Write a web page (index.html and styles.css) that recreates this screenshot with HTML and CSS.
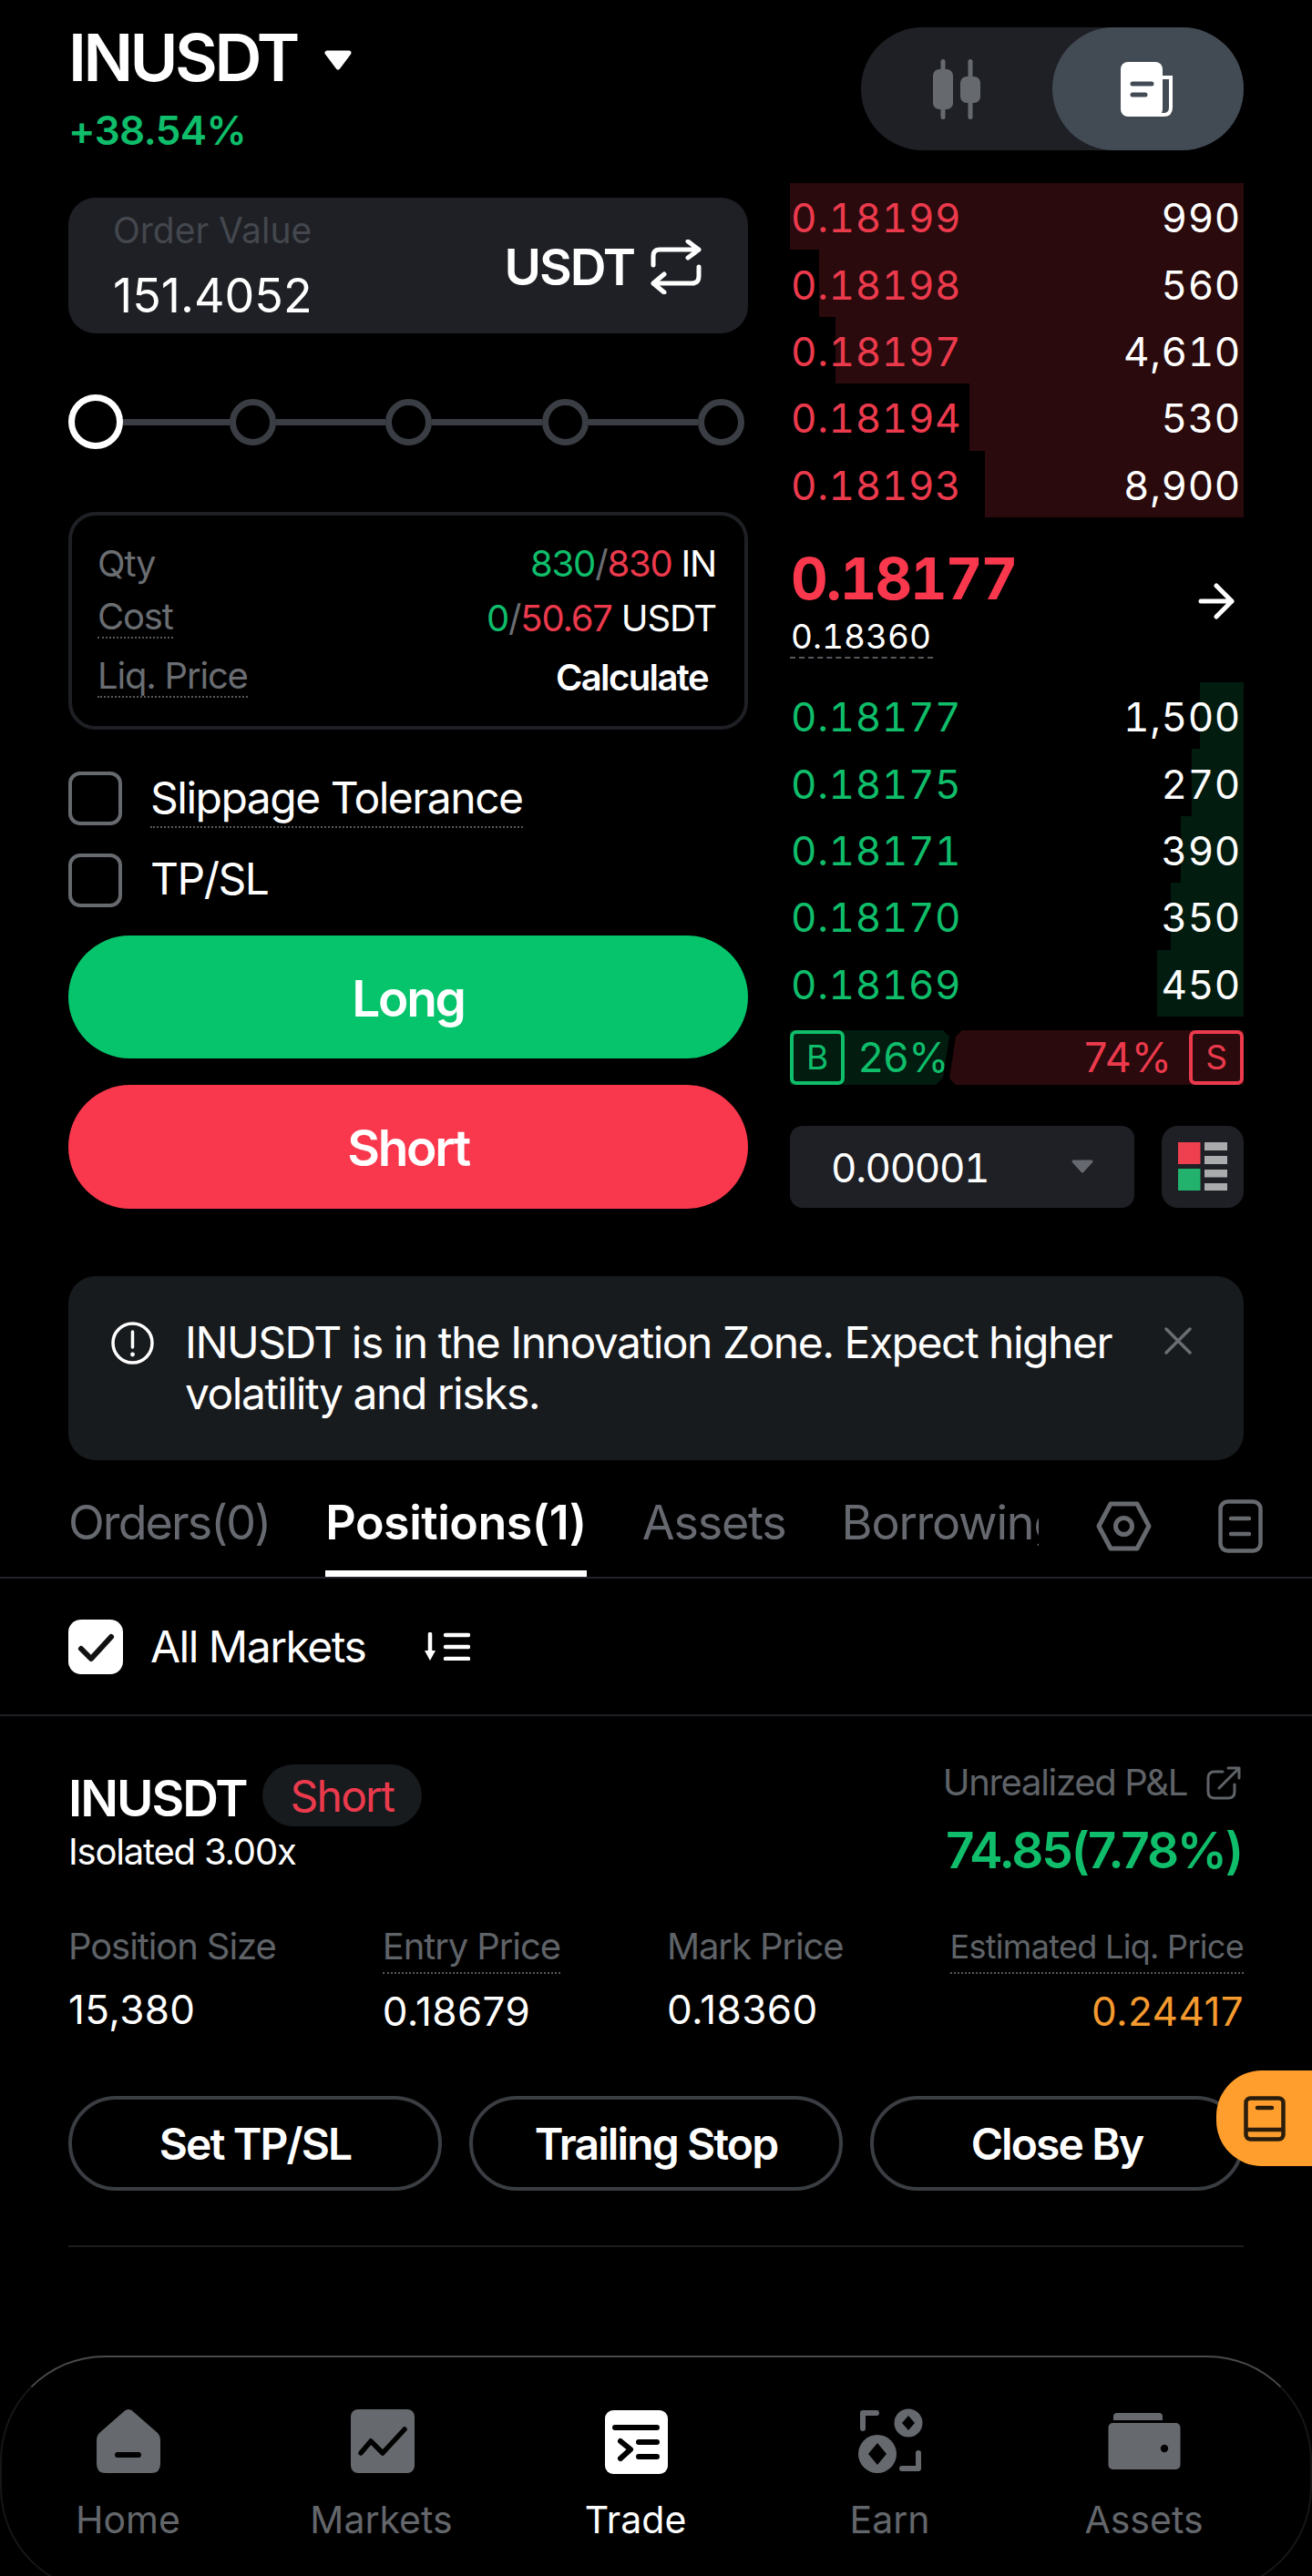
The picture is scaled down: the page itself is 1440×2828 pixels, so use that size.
FILE: index.html
```html
<!DOCTYPE html>
<html lang="en">
<head>
<meta charset="utf-8">
<title>INUSDT</title>
<link rel="stylesheet" href="styles.css">
</head>
<body>
<div class="app">
  <section class="trade">
    <div class="col-left">
      <div class="title-row">
        <h1 class="title">INUSDT</h1>
        <svg class="title-caret" viewBox="0 0 30 22"><path d="M3 3H27L15 19Z" fill="#fff" stroke="#fff" stroke-width="5" stroke-linejoin="round"/></svg>
      </div>
      <div class="change">+38.54%</div>
      <div class="order-input">
        <div class="order-left">
          <div class="order-label">Order Value</div>
          <div class="order-value">151.4052</div>
        </div>
        <div class="order-unit">
          <span>USDT</span>
          <svg class="swap" viewBox="0 0 56 60" fill="none" stroke="#fff" stroke-width="5" stroke-linecap="round" stroke-linejoin="round"><path d="M3 28V18Q3 11 10 11H53M41 2L53 11L41 20"/><path d="M53 30V40Q53 48 46 48H3M15 38L3 48L15 58"/></svg>
        </div>
      </div>
      <div class="slider">
        <span class="knob active"></span><span class="seg"></span>
        <span class="knob"></span><span class="seg"></span>
        <span class="knob"></span><span class="seg"></span>
        <span class="knob"></span><span class="seg"></span>
        <span class="knob"></span>
      </div>
      <div class="info">
        <div class="info-row"><span class="muted">Qty</span><span><span class="up">830</span><span class="muted">/</span><span class="down">830</span> IN</span></div>
        <div class="info-row"><span class="muted dotted">Cost</span><span><span class="up">0</span><span class="muted">/</span><span class="down">50.67</span> USDT</span></div>
        <div class="info-row last"><span class="muted dotted">Liq. Price</span><span class="calc">Calculate</span></div>
      </div>
      <div class="check-row first"><span class="box"></span><span class="check-text dotted-light">Slippage Tolerance</span></div>
      <div class="check-row"><span class="box"></span><span class="check-text plain">TP/SL</span></div>
      <button class="cta long">Long</button>
      <button class="cta short">Short</button>
    </div>

    <div class="col-right">
      <div class="toggle">
        <span class="toggle-half">
          <svg class="candles" viewBox="0 0 52 66" fill="#666a6f"><rect x="8.500" y="0" width="5" height="66" rx="2.500"/><rect x="0" y="11" width="22" height="44" rx="7"/><rect x="38.500" y="0" width="5" height="66" rx="2.500"/><rect x="30" y="19" width="22" height="29" rx="7"/></svg>
        </span>
        <span class="toggle-half on">
          <svg class="doc" viewBox="0 0 58 60"><path d="M44 17H55V50Q55 58 47 58H36" fill="none" stroke="#fff" stroke-width="4"/><rect x="0" y="0" width="46" height="60" rx="8" fill="#fff"/><path d="M13 24H34M13 36H27" stroke="#424a54" stroke-width="5" stroke-linecap="round"/></svg>
        </span>
      </div>

      <div class="book">
        <div class="level ask" style="--d:100%"><span>0.18199</span><span class="qty">990</span></div>
        <div class="level ask" style="--d:93.6%"><span>0.18198</span><span class="qty">560</span></div>
        <div class="level ask" style="--d:90%"><span>0.18197</span><span class="qty">4,610</span></div>
        <div class="level ask" style="--d:60.4%"><span>0.18194</span><span class="qty">530</span></div>
        <div class="level ask" style="--d:57%"><span>0.18193</span><span class="qty">8,900</span></div>
      </div>

      <div class="mid">
        <div>
          <div class="last-price">0.18177</div>
          <div class="mark-wrap"><span class="mark-price">0.18360</span></div>
        </div>
        <svg class="arrow" viewBox="0 0 40 40" fill="none" stroke="#fff" stroke-width="5" stroke-linecap="round" stroke-linejoin="round"><path d="M3 20H37M20 3L37 20L20 37"/></svg>
      </div>

      <div class="book">
        <div class="level bid" style="--d:9.6%"><span>0.18177</span><span class="qty">1,500</span></div>
        <div class="level bid" style="--d:11.4%"><span>0.18175</span><span class="qty">270</span></div>
        <div class="level bid" style="--d:13.9%"><span>0.18171</span><span class="qty">390</span></div>
        <div class="level bid" style="--d:16.1%"><span>0.18170</span><span class="qty">350</span></div>
        <div class="level bid" style="--d:19.1%"><span>0.18169</span><span class="qty">450</span></div>
      </div>

      <div class="ratio">
        <div class="ratio-buy"><span class="tag tag-b">B</span><span class="pct">26%</span></div>
        <div class="ratio-sell"><span class="pct">74%</span><span class="tag tag-s">S</span></div>
      </div>

      <div class="depth-row">
        <div class="precision"><span>0.00001</span><svg class="precision-caret" viewBox="0 0 26 17"><path d="M3 3H23L13 14Z" fill="#66696f" stroke="#66696f" stroke-width="3" stroke-linejoin="round"/></svg></div>
        <div class="layout-btn">
          <svg class="layout-icon" viewBox="0 0 54 53"><rect x="0" y="0" width="24.500" height="24" fill="#ef4050"/><rect x="0" y="29" width="24.500" height="24" fill="#22b26d"/><g fill="#aaabad"><rect x="29" y="0" width="25" height="9"/><rect x="29" y="15" width="25" height="9"/><rect x="29" y="30" width="25" height="8.500"/><rect x="29" y="45" width="25" height="8"/></g></svg>
        </div>
      </div>
    </div>
  </section>

  <div class="notice">
    <svg class="notice-icon" viewBox="0 0 47 47" fill="none" stroke="#fff"><circle cx="23.500" cy="23.500" r="21.500" stroke-width="3.500"/><path d="M23.500 11V28" stroke-width="3.500" stroke-linecap="round"/><circle cx="23.500" cy="36" r="2.400" fill="#fff" stroke="none"/></svg>
    <p class="notice-text">INUSDT is in the Innovation Zone. Expect higher volatility and risks.</p>
    <svg class="notice-close" viewBox="0 0 30 30" fill="none" stroke="#6a6d72" stroke-width="3.500" stroke-linecap="round"><path d="M2 2L28 28M28 2L2 28"/></svg>
  </div>

  <nav class="tabs">
    <div class="tab-scroll">
      <span class="tab tab-orders">Orders(0)</span>
      <span class="tab active">Positions(1)</span>
      <span class="tab">Assets</span>
      <span class="tab">Borrowing</span>
    </div>
    <svg class="tab-hex" viewBox="0 0 61 55" fill="none" stroke="#66696e" stroke-width="5" stroke-linejoin="round"><path d="M3 27.500L16 3H45L58 27.500L45 52H16Z"/><circle cx="30.500" cy="27.500" r="9"/></svg>
    <svg class="tab-doc" viewBox="0 0 49 59" fill="none" stroke="#66696e" stroke-width="4.500" stroke-linecap="round"><rect x="2.500" y="2.500" width="44" height="54" rx="8"/><path d="M14 21H34M14 38H34"/></svg>
  </nav>

  <div class="filter">
    <span class="check-on"><svg viewBox="0 0 60 60" fill="none" stroke="#111" stroke-width="6" stroke-linecap="round" stroke-linejoin="round"><path d="M14 32L25 43L47 19"/></svg></span>
    <span class="filter-text">All Markets</span>
    <svg class="sort" viewBox="0 0 50 31" fill="none" stroke="#fff" stroke-width="4.500" stroke-linecap="round"><path d="M6 2V22"/><path d="M0 20H12L6 31Z" fill="#fff" stroke="none"/><path d="M23 3H48M23 16H48M23 29H48"/></svg>
  </div>

  <section class="position">
    <div class="pos-head">
      <div>
        <div class="pos-name"><span class="pos-symbol">INUSDT</span><span class="pos-side">Short</span></div>
        <div class="pos-mode">Isolated 3.00x</div>
      </div>
      <div class="pos-pnl">
        <div class="pnl-label"><span>Unrealized P&amp;L</span><svg class="share" viewBox="0 0 38 37" fill="none" stroke="#5f6368" stroke-width="3" stroke-linecap="round" stroke-linejoin="round"><path d="M18 6H9Q2 6 2 13V28Q2 35 9 35H24Q31 35 31 28V20"/><path d="M14 24L36 2M24 2H36V13"/></svg></div>
        <div class="pnl-value">74.85(7.78%)</div>
      </div>
    </div>
    <div class="stats">
      <div class="stat"><div class="stat-label">Position Size</div><div class="stat-value">15,380</div></div>
      <div class="stat"><div class="stat-label"><span class="under">Entry Price</span></div><div class="stat-value">0.18679</div></div>
      <div class="stat"><div class="stat-label">Mark Price</div><div class="stat-value">0.18360</div></div>
      <div class="stat stat-right"><div class="stat-label small"><span class="under">Estimated Liq. Price</span></div><div class="stat-value warn">0.24417</div></div>
    </div>
    <div class="actions">
      <button class="action">Set TP/SL</button>
      <button class="action">Trailing Stop</button>
      <button class="action">Close By</button>
    </div>
  </section>

  <footer class="nav">
    <div class="nav-item">
      <svg class="nav-icon" viewBox="0 0 80 80"><path d="M36 6.500Q40 3.500 44 6.500L72 31Q75 34 75 38V65Q75 75 65 75H15Q5 75 5 65V38Q5 34 8 31Z" fill="#66696e"/><path d="M28 55H51" stroke="#000" stroke-width="6" stroke-linecap="round"/></svg>
      <span>Home</span>
    </div>
    <div class="nav-item">
      <svg class="nav-icon" viewBox="0 0 80 80"><rect x="6" y="5" width="70" height="70" rx="8" fill="#66696e"/><path d="M17 53L28 40L41 53L65 27" fill="none" stroke="#000" stroke-width="5.500" stroke-linecap="round" stroke-linejoin="round"/></svg>
      <span>Markets</span>
    </div>
    <div class="nav-item current">
      <svg class="nav-icon" viewBox="0 0 80 80"><rect x="6" y="6" width="69" height="70" rx="9" fill="#fff"/><path d="M17 25H63M43 41H63M43 57H63M23 40L34 49L23 59" fill="none" stroke="#000" stroke-width="6" stroke-linecap="round" stroke-linejoin="round"/></svg>
      <span>Trade</span>
    </div>
    <div class="nav-item">
      <svg class="nav-icon" viewBox="0 0 80 80"><path d="M10 26V9H25M71 53V70H53" fill="none" stroke="#66696e" stroke-width="6" stroke-linecap="round" stroke-linejoin="round"/><circle cx="60" cy="20" r="15.500" fill="#66696e"/><path d="M60 12L67 20L60 28L53 20Z" fill="#000"/><circle cx="26" cy="54" r="21" fill="#66696e"/><path d="M26 42L36 54L26 66L16 54Z" fill="#000"/></svg>
      <span>Earn</span>
    </div>
    <div class="nav-item">
      <svg class="nav-icon" viewBox="0 0 80 80"><path d="M6 17V13Q6 9 10 9H56Q60 9 60 13V17Z" fill="#66696e"/><rect x="0.500" y="20" width="79" height="51" rx="5" fill="#66696e"/><circle cx="62" cy="48" r="4.200" fill="#000"/></svg>
      <span>Assets</span>
    </div>
  </footer>

  <aside class="guide">
    <svg class="guide-icon" viewBox="0 0 46 50" fill="none" stroke="#2a1d0c" stroke-width="4.500" stroke-linejoin="round"><rect x="2.500" y="2.500" width="41" height="45" rx="5"/><path d="M2.500 37H43.500"/><path d="M15 13H31" stroke-width="4.500" stroke-linecap="round"/></svg>
  </aside>
</div>
</body>
</html>
```

FILE: styles.css
```css
* { box-sizing: border-box; }
html, body { margin: 0; padding: 0; background: #000; }
body { color: #fff; font-family: Inter, "Noto Sans", sans-serif; }
.app { position: relative; width: 1440px; height: 2828px; overflow: hidden; background: #000; }
h1, p { margin: 0; }
button { font-family: inherit; color: inherit; background: none; border: 0; padding: 0; }

.trade { display: grid; grid-template-columns: 746px 498px; column-gap: 46px; padding: 0 75px; }
.col-left { display: flex; flex-direction: column; padding-top: 23px; }
.col-right { display: flex; flex-direction: column; padding-top: 30px; }

.title-row { display: flex; align-items: center; height: 80px; }
.title { font-size: 72px; line-height: 80px; font-weight: 600; letter-spacing: -3.5px; }
.title-caret { width: 30px; height: 22px; margin: 6px 0 0 30px; }
.change { margin-top: 18px; font-size: 44px; line-height: 44px; font-weight: 600; letter-spacing: -0.6px; color: #0fbd6a; }

.order-input { display: flex; justify-content: space-between; align-items: center; height: 149px; margin-top: 52px; padding: 0 51px 0 49px; border-radius: 30px; background: #1e2025; }
.order-label { padding-top: 1px; font-size: 39px; line-height: 40px; color: #44474d; }
.order-value { margin-top: 26px; font-size: 52px; line-height: 52px; }
.order-unit { display: flex; align-items: center; gap: 18px; margin-top: 2px; font-size: 55px; font-weight: 600; letter-spacing: -2px; }
.swap { width: 56px; height: 60px; }

.slider { display: flex; align-items: center; height: 60px; margin-top: 67px; padding-right: 3.6px; }
.knob { flex: none; width: 51px; height: 51px; border: 7px solid #3a3e44; border-radius: 50%; }
.knob.active { position: relative; width: 60px; height: 60px; margin-right: -4px; border-color: #fff; }
.seg { flex: 1; height: 7px; background: #3a3e44; }

.info { height: 239px; margin-top: 69px; padding: 22px 31px 0 28px; border: 4px solid #1e2025; border-radius: 30px; font-size: 40px; letter-spacing: -1.2px; }
.info-row { display: flex; justify-content: space-between; align-items: center; height: 60px; }
.info-row.last { margin-top: 5px; }
.muted { color: #6a6d72; }
.up { color: #0fbd6a; }
.down { color: #ec3a4d; }
.dotted { display: inline-block; line-height: 44px; border-bottom: 2px dotted #55585d; }
.calc { margin-right: 9px; font-weight: 600; letter-spacing: -1.6px; }

.check-row { display: flex; align-items: center; gap: 31px; height: 59px; margin-top: 31px; }
.check-row.first { margin-top: 46px; }
.box { flex: none; width: 59px; height: 59px; border: 4px solid #66696e; border-radius: 13px; }
.check-text { font-size: 48px; letter-spacing: -1.5px; }
.dotted-light { display: inline-block; line-height: 62px; border-bottom: 2px dotted #55585d; }
.plain { padding-bottom: 4px; }

.cta { display: block; width: 100%; padding-top: 2px; border-radius: 70px; font-size: 55px; font-weight: 600; letter-spacing: -2.3px; }
.long { height: 135px; margin-top: 31px; background: #05c46b; }
.short { height: 136px; margin-top: 29px; background: #fa384d; }

.toggle { display: flex; align-self: flex-end; width: 420px; height: 135px; border-radius: 68px; background: #1e2025; }
.toggle-half { display: flex; flex: 1; align-items: center; justify-content: center; border-radius: 68px; }
.toggle-half.on { background: #424a54; }
.candles { width: 52px; height: 66px; }
.doc { width: 58px; height: 60px; margin-left: -2px; }

.book { display: flex; flex-direction: column; }
.col-right .toggle + .book { margin-top: 36px; }
.level { display: flex; justify-content: space-between; align-items: center; height: 73.4px; padding: 3px 3px 0 1px; font-size: 44px; font-feature-settings: "tnum" 1; letter-spacing: 0.6px; }
.ask { color: #ec3a4d; background: linear-gradient(to left, #2a0a0c var(--d), transparent var(--d)); }
.bid { color: #0fbd6a; background: linear-gradient(to left, #031c10 var(--d), transparent var(--d)); }
.qty { color: #fff; }

.mid { display: flex; justify-content: space-between; align-items: flex-start; height: 181px; padding-top: 32px; }
.last-price { padding-left: 1px; font-size: 63px; line-height: 70px; font-weight: 700; letter-spacing: -2px; color: #fa384d; font-feature-settings: "tnum" 1; }
.mark-wrap { margin-top: 7px; }
.mark-price { display: inline-block; padding: 0 2px 0 1px; font-size: 37px; line-height: 44px; font-feature-settings: "tnum" 1; border-bottom: 2px dashed #55585d; }
.arrow { width: 40px; height: 40px; margin: 40px 10px 0 0; }

.ratio { display: flex; height: 60px; margin-top: 15px; font-size: 45px; }
.ratio-buy, .ratio-sell { display: flex; align-items: center; height: 60px; }
.ratio-buy { width: 175px; gap: 15px; color: #0fbd6a; background: #031c10; clip-path: polygon(0 0, 168px 0, 175px 7px, 168px 52px, 160px 60px, 0 60px); }
.ratio-sell { flex: 1; justify-content: flex-end; gap: 19px; color: #ec3a4d; background: #2a0a0c; clip-path: polygon(14px 0, 100% 0, 100% 100%, 7px 100%, 0 53px, 7px 7px); }
.tag { display: flex; flex: none; align-items: center; justify-content: center; width: 60px; height: 60px; border: 4px solid; border-radius: 7px; font-size: 37px; }

.depth-row { display: flex; justify-content: space-between; margin-top: 45px; }
.precision { display: flex; align-items: center; justify-content: space-between; width: 378px; height: 90px; padding: 0 44px 0 45px; border-radius: 14px; background: #1e2025; font-size: 44px; letter-spacing: -1.4px; font-feature-settings: "tnum" 1; }
.precision span { padding-top: 2px; }
.precision-caret { width: 26px; height: 17px; }
.layout-btn { display: flex; align-items: center; justify-content: center; width: 90px; height: 90px; border-radius: 18px; background: #1e2025; }
.layout-icon { width: 54px; height: 53px; }

.notice { display: flex; align-items: flex-start; height: 202px; margin: 74px 75px 0; padding: 50px 0 0 47px; border-radius: 30px; background: #181b1e; }
.notice-icon { flex: none; width: 47px; height: 47px; }
.notice-text { flex: none; width: 1050px; margin: -5px 0 0 34px; font-size: 48px; line-height: 56px; letter-spacing: -1.5px; }
.notice-close { flex: none; width: 30px; height: 30px; margin: 6px 0 0 25px; }

.tabs { display: flex; align-items: flex-start; height: 130px; border-bottom: 2px solid #22242a; }
.tab-scroll { display: flex; flex: none; gap: 61px; width: 1140px; height: 128px; padding-left: 75px; overflow: hidden; }
.tab { flex: none; height: 128px; padding-top: 43px; border-bottom: 7px solid transparent; font-size: 52px; line-height: 52px; letter-spacing: -1.2px; color: #666a70; }
.tab-orders { letter-spacing: -1.9px; }
.tab.active { border-bottom-color: #fff; font-weight: 600; letter-spacing: -0.5px; color: #fff; }
.tab-hex { flex: none; width: 61px; height: 55px; margin: 45px 0 0 63px; }
.tab-doc { flex: none; width: 49px; height: 59px; margin: 43px 0 0 73px; }

.filter { display: flex; align-items: center; height: 151px; padding-left: 75px; border-bottom: 2px solid #1e2025; }
.check-on { flex: none; width: 60px; height: 60px; border-radius: 14px; background: #fff; }
.check-on svg { display: block; }
.filter-text { margin-left: 30px; font-size: 48px; letter-spacing: -1.5px; }
.sort { width: 50px; height: 31px; margin-left: 65px; }

.position { padding: 53px 75px 0; }
.pos-head { display: flex; justify-content: space-between; align-items: flex-start; }
.pos-name { display: flex; align-items: center; height: 68px; }
.pos-symbol { padding-top: 5px; font-size: 55px; font-weight: 600; letter-spacing: -2px; }
.pos-side { display: flex; align-items: center; height: 68px; margin-left: 17px; padding: 0 31px; border-radius: 34px; background: #181b1e; font-size: 48px; letter-spacing: -1.8px; color: #ec3a4d; }
.pos-mode { margin-top: 6px; font-size: 40px; line-height: 44px; letter-spacing: -1.2px; }
.pos-pnl { display: flex; flex-direction: column; align-items: flex-end; }
.pnl-label { display: flex; align-items: center; gap: 21px; height: 40px; padding-right: 3px; font-size: 40px; line-height: 40px; letter-spacing: -1.3px; color: #5f6368; }
.share { width: 38px; height: 37px; }
.pnl-value { margin-top: 24px; padding-right: 2px; font-size: 55px; line-height: 60px; font-weight: 600; letter-spacing: -2.3px; color: #0fbd6a; }

.stats { display: flex; justify-content: space-between; margin-top: 56px; }
.stat-label { height: 48px; font-size: 40px; line-height: 40px; letter-spacing: -1.1px; color: #5f6368; }
.stat-label .under { display: inline-block; height: 50px; border-bottom: 2px dotted #55585d; }
.stat-label:has(.under) { height: 50px; }
.stat-label.small { font-size: 36px; letter-spacing: -0.7px; }
.stat-value { margin-top: 19px; font-size: 44px; line-height: 44px; letter-spacing: 0.4px; }
.stat-right { text-align: right; }
.warn { color: #f59a2f; }

.actions { display: flex; gap: 30px; height: 166px; margin-top: 71px; padding-bottom: 62px; border-bottom: 2px solid #1a1c1f; }
.action { flex: 1; height: 104px; border: 4px solid #3a3d42; border-radius: 52px; font-size: 48px; font-weight: 600; letter-spacing: -1.9px; }

.nav { display: grid; grid-template-columns: 277px repeat(4, 279px); height: 260px; margin-top: 119px; padding-top: 52px; border: 2px solid #161616; border-top-color: #4a4a4a; border-radius: 115px; }
.nav-item { display: flex; flex-direction: column; align-items: center; font-size: 41px; line-height: 44px; color: #63666b; }
.nav-item.current { color: #fff; }
.nav-icon { width: 80px; height: 80px; margin-bottom: 24px; }

.guide { position: absolute; top: 2273px; right: 0; display: flex; align-items: center; width: 105px; height: 105px; padding: 0 0 0 30px; border-radius: 50px 0 0 50px; background: #ff9e2c; }
.guide-icon { width: 46px; height: 50px; margin-top: 0; }
```
